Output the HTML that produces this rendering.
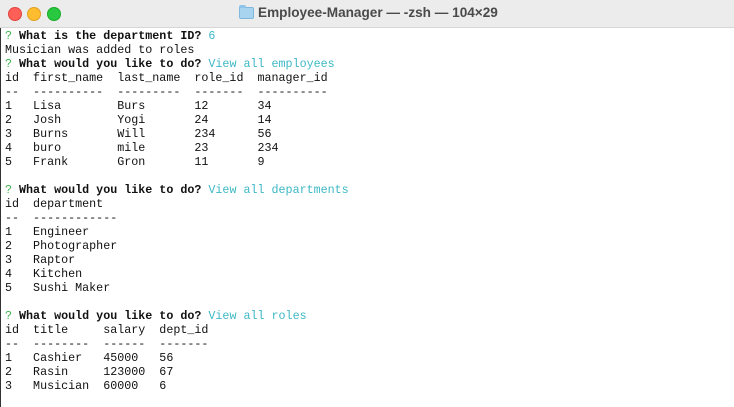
<!DOCTYPE html>
<html><head><meta charset="utf-8"><style>
html,body{margin:0;padding:0;width:734px;height:407px;overflow:hidden;background:#fff}
.bar{position:absolute;left:0;top:0;width:734px;height:27px;background:#ececec;border-bottom:1px solid #d6d6d6}
.dot{position:absolute;top:7px;width:12px;height:12px;border-radius:50%}
.title{position:absolute;left:258px;top:5px;font:bold 13.6px "Liberation Sans",sans-serif;color:#4a4a4a;white-space:nowrap}
.folder{position:absolute;left:239px;top:7px;width:15px;height:12px;background:#a9d4f0;border:1px solid #7fb7dd;border-radius:2px;box-sizing:border-box}
.folder:before{content:"";position:absolute;left:-1px;top:-3px;width:7px;height:3px;background:#8fc3e8;border-radius:2px 2px 0 0}
.lb{position:absolute;left:0;top:28px;width:1px;height:379px;background:#333}
pre{position:absolute;left:5px;top:29px;margin:0;font:11.7px/14px "Liberation Mono",monospace;color:#111}
b{font-weight:bold}
.g{color:#3cb44b}.c{color:#3db8c5}.k{color:#aaa}
</style></head><body>
<div class="bar">
<div class="dot" style="left:8px;background:#fe5f57;border:0.5px solid #e0443e"></div>
<div class="dot" style="left:27px;background:#febc2e;border:0.5px solid #dea123"></div>
<div class="dot" style="left:47px;background:#28c840;border:0.5px solid #1aab29"></div>
<div class="folder"></div>
<div class="title">Employee-Manager — -zsh — 104×29</div>
</div>
<div class="lb"></div>
<pre><span class="g">?</span> <b>What is the department ID?</b> <span class="c">6</span>
Musician was added to roles
<span class="g">?</span> <b>What would you like to do?</b> <span class="c">View all employees</span>
id  first_name  last_name  role_id  manager_id
--  ----------  ---------  -------  ----------
1   Lisa        Burs       12       34
2   Josh        Yogi       24       14
3   Burns       Will       234      56
4   buro        mile       23       234
5   Frank       Gron       11       9

<span class="g">?</span> <b>What would you like to do?</b> <span class="c">View all departments</span>
id  department
--  ------------
1   Engineer
2   Photographer
3   Raptor
4   Kitchen
5   Sushi Maker

<span class="g">?</span> <b>What would you like to do?</b> <span class="c">View all roles</span>
id  title     salary  dept_id
--  --------  ------  -------
1   Cashier   45000   56
2   Rasin     123000  67
3   Musician  60000   6
</pre>
</body></html>
